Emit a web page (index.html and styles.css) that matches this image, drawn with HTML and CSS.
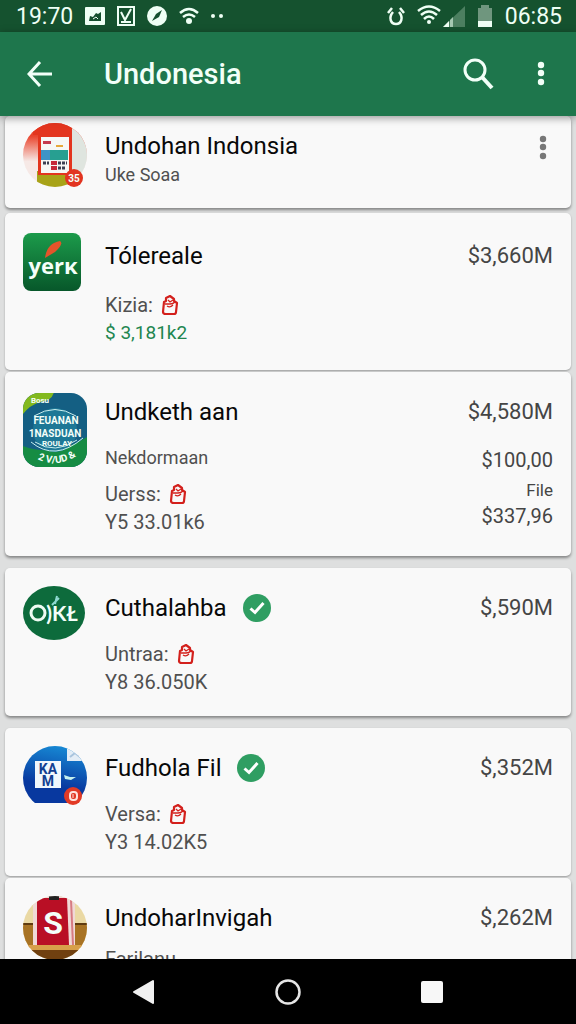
FILE: index.html
```html
<!DOCTYPE html>
<html lang="id">
<head>
    <meta charset="UTF-8">
    <meta name="viewport" content="width=device-width, initial-scale=1.0">
    <title>Undonesia</title>
    <link rel="stylesheet" href="styles.css">
</head>
<body>

<!-- shared icons -->
<svg class="defs" width="0" height="0" aria-hidden="true">
    <symbol id="purse" viewBox="0 0 18 22">
        <path d="M3 8 L2 18 Q2 20 5 20 H13 Q15 20 15 18 L16 9 L13 7 V5 L9 2 L5 4 V7 Z" fill="none" stroke="#d3201c" stroke-width="2.200" stroke-linejoin="round"/>
        <path d="M4 10 H9 Q12 10 14 8 M7 6 L9 8 L12 6 M6 12 Q9 14 12 11" fill="none" stroke="#d3201c" stroke-width="1.300"/>
    </symbol>
    <symbol id="verified" viewBox="0 0 28 28">
        <circle cx="14" cy="14" r="14" fill="#2f9e62"/>
        <path d="M7.500 14.500 L12 18.500 L20.500 9" fill="none" stroke="#fff" stroke-width="3"/>
    </symbol>
    <symbol id="dots" viewBox="0 0 10 28">
        <circle cx="5" cy="5" r="3.200"/>
        <circle cx="5" cy="13" r="3.200"/>
        <circle cx="5" cy="22" r="3.200"/>
    </symbol>
</svg>

<div class="status-bar">
    <span class="clock">19:70</span>
    <svg width="20" height="20" viewBox="0 0 20 20"><rect y="1" width="20" height="18" rx="1" fill="#effff5"/><path d="M4 15 L5 10 L8 11 L11 7 L13 8 L16 6 V15 Z" fill="#15502f"/><path d="M8 13 L11 11 L13 13" stroke="#effff5" fill="none"/></svg>
    <svg width="18" height="20" viewBox="0 0 18 20"><rect x="1" y="1" width="16" height="18" fill="none" stroke="#effff5" stroke-width="2"/><path d="M4 6 L8 14 L14 3 M4 16 H14" fill="none" stroke="#effff5" stroke-width="2"/></svg>
    <svg width="20" height="20" viewBox="0 0 20 20"><circle cx="10" cy="10" r="10" fill="#effff5"/><path d="M5 15 L9 8 L15 4 L12 11 Z" fill="#15502f"/></svg>
    <svg width="20" height="18" viewBox="0 0 20 18"><path d="M1 6 Q10 -2 19 6 M4 10 Q10 5 16 10" fill="none" stroke="#effff5" stroke-width="2.500"/><circle cx="10" cy="14" r="3" fill="#effff5"/></svg>
    <svg width="12" height="6" viewBox="0 0 12 6"><circle cx="2" cy="3" r="2" fill="#effff5"/><circle cx="10" cy="3" r="2" fill="#effff5"/></svg>
    <span class="spacer"></span>
    <svg width="18" height="20" viewBox="0 0 18 20"><path d="M6 6 C1 12 4 18 9 18 C14 18 17 12 12 6 M1 7 L5 2 M17 7 L13 2" fill="none" stroke="#effff5" stroke-width="2.500"/></svg>
    <div class="signals">
        <svg width="24" height="20" viewBox="0 0 24 20"><path d="M1 6 Q12 -3 23 6 M4 10 Q12 3 20 10 M7 14 Q12 9 17 14" fill="none" stroke="#effff5" stroke-width="2.500"/><circle cx="12" cy="17" r="2" fill="#effff5"/></svg>
        <svg width="22" height="22" viewBox="0 0 22 22"><path d="M0 22 L22 1 V22 Z" fill="#4c7f60"/><path d="M0 22 L6 16 V22 Z" fill="#effff5"/><path d="M7 22 V15 L10 12 V22 Z" fill="#a5c9b2"/></svg>
    </div>
    <svg width="16" height="22" viewBox="0 0 16 22"><path d="M1 3 H4 V0 H12 V3 H15 V22 H1 Z" fill="#6f967e"/><rect x="1" y="16" width="14" height="6" fill="#effff5"/></svg>
    <span class="clock">06:85</span>
</div>

<header class="app-bar">
    <button class="icon-button" aria-label="Kembali">
        <svg width="26" height="28" viewBox="0 0 26 28"><path d="M13 2 L2 14 L13 26 M2 14 H25" fill="none" stroke="#f2fff8" stroke-width="3"/></svg>
    </button>
    <h1>Undonesia</h1>
    <button class="icon-button" aria-label="Cari">
        <svg width="32" height="32" viewBox="0 0 32 32"><circle cx="13" cy="12" r="10" fill="none" stroke="#f2fff8" stroke-width="3"/><path d="M20 19 L30 30" stroke="#f2fff8" stroke-width="4"/></svg>
    </button>
    <button class="icon-button more" aria-label="Menu">
        <svg width="10" height="28"><use href="#dots"/></svg>
    </button>
</header>

<main class="list">
    <article class="card first">
        <svg class="logo" width="64" height="66" viewBox="0 0 64 66">
            <defs>
                <clipPath id="round"><circle cx="32" cy="32" r="32"/></clipPath>
                <linearGradient id="fade" x1="0" y1="0" x2="0" y2="1"><stop offset="0.200" stop-color="#e9432c"/><stop offset="0.600" stop-color="#f6e9e6"/></linearGradient>
            </defs>
            <g clip-path="url(#round)">
                <rect width="64" height="64" fill="url(#fade)"/>
                <path d="M48 4 H64 V64 H48 Z" fill="#dfe5df"/>
                <rect x="14" y="48" width="34" height="16" fill="#a8a318"/>
                <path d="M10 0 H49 V52 H15 V12 H10 Z" fill="#e3351e"/>
                <rect x="18" y="14" width="28" height="36" fill="#f6f7f5"/>
                <rect x="20" y="18" width="8" height="3" fill="#c53a4d"/>
                <rect x="18" y="27" width="9" height="10" fill="#3e93c6"/>
                <rect x="27" y="27" width="18" height="10" fill="#279f91"/>
                <path d="M33 23 H40" stroke="#e6a83a" stroke-width="2"/>
                <path d="M20 40 H26 M35 40 H44 M35 45 H43" stroke="#3b3f52" stroke-width="3" stroke-dasharray="3 1"/>
                <path d="M28 40 H34 M28 45 H34" stroke="#c6293b" stroke-width="4"/>
            </g>
            <circle cx="51" cy="55" r="9" fill="#e23420"/>
            <text x="51" y="59" class="logo-text badge-text">35</text>
        </svg>
        <div class="info">
            <h2>Undohan Indonsia</h2>
            <p class="subtitle">Uke Soaa</p>
        </div>
        <button class="icon-button card-more" aria-label="Opsi">
            <svg width="10" height="28"><use href="#dots"/></svg>
        </button>
    </article>

    <article class="card joined roomy">
        <svg class="logo" width="64" height="60" viewBox="0 0 64 60">
            <defs><linearGradient id="leaf" x1="0" y1="0" x2="0" y2="1"><stop offset="0" stop-color="#1c9b4b"/><stop offset="1" stop-color="#07572a"/></linearGradient></defs>
            <rect width="58" height="58" rx="8" fill="url(#leaf)"/>
            <path d="M22 25 Q24 10 37 8 Q41 11 32 19 Q27 22 22 25 Z" fill="#e5542a"/>
            <text x="30" y="41" class="logo-text yerk-text">yerĸ</text>
        </svg>
        <div class="info">
            <h2>Tólereale</h2>
            <p class="detail">Kizia: <svg width="18" height="22"><use href="#purse"/></svg></p>
            <p class="green">$ 3,181k2</p>
        </div>
        <div class="amounts"><span class="amount">$3,660M</span></div>
    </article>

    <article class="card">
        <svg class="logo large" width="64" height="76" viewBox="0 0 64 76">
            <defs><clipPath id="tile"><rect y="1" width="64" height="74" rx="16"/></clipPath></defs>
            <g clip-path="url(#tile)">
                <rect width="64" height="76" fill="#145f83"/>
                <path d="M0 0 H31 Q29 9 17 10 Q7 13 0 22 Z" fill="#83b91e"/>
                <path d="M0 54 Q32 66 64 45 V76 H0 Z" fill="#168c43"/>
                <circle cx="32" cy="38" r="22" fill="#1d7896"/>
                <path d="M11 24 Q32 11 53 24 M8 50 Q32 70 60 46 M12 50 Q32 63 54 48" fill="none" stroke="#c8eeee" stroke-width="1"/>
            </g>
            <text x="17" y="11" class="logo-text tiny-text">Bosu</text>
            <text x="33" y="32" class="logo-text small-text">FEUANAN</text>
            <text x="32" y="45" class="logo-text small-text">1NASDUAN</text>
            <text x="34" y="54" class="logo-text tiny-text">ROULAY</text>
            <path id="arc" d="M6 62 Q34 82 61 58" fill="none"/>
            <text class="logo-text small-text"><textPath href="#arc" startOffset="50%">2 V/UD &amp;</textPath></text>
        </svg>
        <div class="info">
            <h2>Undketh aan</h2>
            <p class="detail subtitle">Nekdormaan</p>
            <p class="seller">Uerss: <svg width="18" height="22"><use href="#purse"/></svg></p>
            <p>Y5 33.01k6</p>
        </div>
        <div class="amounts">
            <span class="amount">$4,580M</span>
            <span class="detail">$100,00</span>
            <span class="note">File</span>
            <span>$337,96</span>
        </div>
    </article>

    <article class="card">
        <svg class="logo" width="64" height="56" viewBox="0 0 64 56">
            <ellipse cx="31" cy="27" rx="31" ry="27" fill="#0d6b3c"/>
            <circle cx="15" cy="27" r="7" fill="none" stroke="#eefbf3" stroke-width="3"/>
            <text x="39" y="35" class="logo-text okt-text">)KŁ</text>
            <path d="M29 19 L36 12 M32 18 L34 10" stroke="#8fd9d0" stroke-width="2"/>
        </svg>
        <div class="info">
            <h2>Cuthalahba <svg width="28" height="28"><use href="#verified"/></svg></h2>
            <p class="detail">Untraa: <svg width="18" height="22"><use href="#purse"/></svg></p>
            <p>Y8 36.050K</p>
        </div>
        <div class="amounts"><span class="amount">$,590M</span></div>
    </article>

    <article class="card joined">
        <svg class="logo" width="64" height="60" viewBox="0 0 64 60">
            <defs>
                <linearGradient id="sea" x1="0.600" y1="0" x2="0.400" y2="1"><stop offset="0" stop-color="#1789d4"/><stop offset="0.700" stop-color="#08389f"/></linearGradient>
            </defs>
            <g clip-path="url(#round)">
                <rect width="64" height="57" fill="url(#sea)"/>
                <path d="M44 0 H64 V15 H44 Z" fill="#e3edf6"/>
                <path d="M47 11 L52 7 L57 11" fill="none" stroke="#a9c4dd" stroke-width="2"/>
            </g>
            <rect x="12" y="15" width="26" height="27" fill="#f1f7fc"/>
            <text x="25" y="28" class="logo-text kam-text">KA</text>
            <text x="25" y="40" class="logo-text kam-text">M</text>
            <path d="M41 29 L47 31 H53 L48 34 L42 33 Z" fill="#c5f0ee"/>
            <circle cx="50" cy="50" r="9" fill="#e23a25"/>
            <rect x="47" y="46" width="7" height="8" rx="3" fill="none" stroke="#ffe3dc" stroke-width="2"/>
            <path d="M50 48 V52" stroke="#ffe3dc" stroke-width="1"/>
        </svg>
        <div class="info">
            <h2>Fudhola Fil <svg width="28" height="28"><use href="#verified"/></svg></h2>
            <p class="detail">Versa: <svg width="18" height="22"><use href="#purse"/></svg></p>
            <p>Y3 14.02K5</p>
        </div>
        <div class="amounts"><span class="amount">$,352M</span></div>
    </article>

    <article class="card">
        <svg class="logo" width="64" height="66" viewBox="0 0 64 66">
            <g clip-path="url(#round)">
                <rect width="64" height="64" fill="#ead9a4"/>
                <rect y="27" width="64" height="25" fill="#a87324"/>
                <path d="M0 28 H64" stroke="#5f3b10" stroke-width="2"/>
                <path d="M10 0 H52 V50 H10 Z" fill="#f0d9d6"/>
                <path d="M14 2 H44 L46 49 H14 Z" fill="#b90f25"/>
                <path d="M48 4 L50 49" stroke="#d77b82" stroke-width="2"/>
                <rect x="26" width="10" height="4" fill="#222"/>
                <rect y="49" width="64" height="5" fill="#d8a04a"/>
                <rect y="54" width="64" height="10" fill="#704010"/>
            </g>
            <text x="30" y="38" class="logo-text s-text">S</text>
        </svg>
        <div class="info">
            <h2>UndoharInvigah</h2>
            <p class="detail last">Farilanu</p>
        </div>
        <div class="amounts"><span class="amount">$,262M</span></div>
    </article>
</main>

<nav class="nav-bar">
    <button aria-label="Kembali"><svg width="22" height="26" viewBox="0 0 22 26"><path d="M1 13 L20 2 V24 Z" fill="#f0f0f0" stroke="#f0f0f0" stroke-width="2" stroke-linejoin="round"/></svg></button>
    <button aria-label="Beranda"><svg width="28" height="28" viewBox="0 0 28 28"><circle cx="14" cy="14" r="11.500" fill="none" stroke="#e6e6e6" stroke-width="2.500"/></svg></button>
    <button aria-label="Terbaru"><svg width="22" height="22" viewBox="0 0 22 22"><rect width="22" height="22" rx="2" fill="#f7f7f7"/></svg></button>
</nav>

</body>
</html>
```
FILE: styles.css
```css
* {
    box-sizing: border-box;
}
body {
    font-family: Roboto, "Liberation Sans", sans-serif;
    background-color: #dedfdf;
    display: flex;
    flex-direction: column;
    height: 100vh;
    margin: 0;
    overflow: hidden;
}
h1, h2, p {
    margin: 0;
}
button {
    background: none;
    border: none;
    padding: 0;
    cursor: pointer;
}
svg {
    display: block;
    flex: none;
}
.defs {
    position: absolute;
}
.status-bar {
    background-color: #15522f;
    color: #effff5;
    display: flex;
    align-items: center;
    gap: 12px;
    height: 32px;
    flex: none;
    padding: 0 14px 0 16px;
}
.clock {
    font-size: 23px;
}
.spacer {
    flex: 1;
}
.signals {
    display: flex;
    gap: 2px;
}
.app-bar {
    background-color: #1e764c;
    color: #f2fff8;
    display: flex;
    align-items: center;
    height: 84px;
    flex: none;
    padding: 0 20px;
    box-shadow: 0 2px 8px rgba(0, 0, 0, 0.4);
    z-index: 1;
}
.app-bar h1 {
    flex: 1;
    margin-left: 44px;
    font-size: 29px;
    font-weight: 500;
}
.icon-button {
    display: flex;
    justify-content: center;
    align-items: center;
    width: 40px;
    height: 48px;
}
.more {
    fill: #f2fff8;
    width: 30px;
    margin-left: 28px;
}
.list {
    flex: 1;
    min-height: 0;
    overflow: hidden;
    padding: 0 5px;
}
.card {
    background-color: #f9f9f9;
    border-radius: 5px;
    box-shadow: 0 2px 3px rgba(0, 0, 0, 0.4);
    display: flex;
    gap: 18px;
    padding: 0 18px 20px;
    margin-bottom: 12px;
}
.card.first {
    padding-bottom: 19px;
    margin-bottom: 5px;
}
.card.joined {
    margin-bottom: 2px;
    box-shadow: 0 1px 2px rgba(0, 0, 0, 0.3);
}
.card.roomy {
    padding-bottom: 23px;
}
.logo {
    margin-top: 18px;
}
.logo.large, .roomy .logo {
    margin-top: 20px;
}
.first .logo {
    margin-top: 7px;
}
.info {
    flex: 1;
    padding-top: 25px;
    color: #505050;
    font-size: 20px;
    line-height: 28px;
}
.first .info {
    padding-top: 15px;
}
.roomy .info, .roomy .amounts {
    padding-top: 28px;
}
.info h2 {
    display: flex;
    align-items: center;
    gap: 16px;
    color: #080808;
    font-size: 24px;
    font-weight: 400;
    line-height: 30px;
}
.info p {
    display: flex;
    align-items: center;
    gap: 8px;
}
.info .detail {
    margin-top: 17px;
}
.info .subtitle {
    font-size: 18px;
}
.info .seller {
    margin-top: 8px;
}
.roomy .info .detail {
    margin-top: 20px;
}
.info .last {
    margin-top: 12px;
}
.info .green {
    color: #218650;
    font-size: 19px;
}
.card-more {
    fill: #777;
    width: 20px;
    margin-top: 8px;
}
.amounts {
    display: flex;
    flex-direction: column;
    align-items: flex-end;
    padding-top: 25px;
    color: #454545;
    font-size: 20px;
    line-height: 28px;
}
.amounts .amount {
    font-size: 22px;
    line-height: 30px;
}
.amounts .detail {
    margin-top: 19px;
}
.amounts .note {
    margin-top: 4px;
    font-size: 17px;
    line-height: 24px;
}
.nav-bar {
    background-color: #000;
    display: flex;
    justify-content: center;
    height: 65px;
    flex: none;
}
.nav-bar button {
    display: flex;
    justify-content: center;
    align-items: center;
    width: 25%;
}
.logo-text {
    fill: #f4fff9;
    font-weight: 700;
    text-anchor: middle;
}
.badge-text {
    font-size: 10px;
}
.yerk-text {
    font-family: "Open Sans", sans-serif;
    font-size: 22px;
}
.tiny-text {
    font-size: 8px;
}
.small-text {
    font-size: 10px;
}
.okt-text {
    font-family: Lato, sans-serif;
    font-size: 21px;
}
.kam-text {
    fill: #123f91;
    font-size: 14px;
}
.s-text {
    font-size: 32px;
}
```
